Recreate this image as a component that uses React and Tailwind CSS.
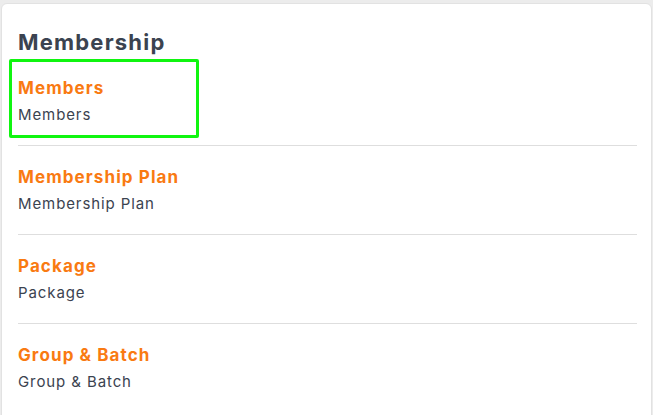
export default function App() {
    const items = [
        { title: "Members", sub: "Members" },
        { title: "Membership Plan", sub: "Membership Plan" },
        { title: "Package", sub: "Package" },
        { title: "Group & Batch", sub: "Group & Batch" },
    ];

    return (
        <div className="h-[415px] overflow-hidden bg-[#ececec] pt-[3px] pl-[1px] pr-[1px]" style={{ fontFamily: "Inter, 'Open Sans', sans-serif" }}>
            <div className="h-[420px] bg-white rounded-md border border-[#e2e2e2] pl-[16px] pr-[14px] pt-[23px]">
                <h2 className="text-[22px] leading-[30px] font-bold tracking-[1.2px] text-[#3b4350]">Membership</h2>

                {items.map((item, i) => (
                    <div key={item.title} className={"relative pt-[18px] pb-[17px] " + (i < items.length - 1 ? "border-b border-[#dedede]" : "")}>
                        {/* selection highlight on first item */}
                        {i === 0 && (
                            <div className="absolute top-[2px] left-[-9px] w-[190px] h-[79px] border-[3px] border-[#10f510] rounded-[2px]" />
                        )}
                        <div className="text-[17px] leading-[26px] font-bold tracking-[1.1px] text-[#f97a12]">{item.title}</div>
                        <div className="pt-[1px] text-[15px] leading-[26px] tracking-[0.9px] text-[#3b4350]">{item.sub}</div>
                    </div>
                ))}
            </div>
        </div>
    );
}
